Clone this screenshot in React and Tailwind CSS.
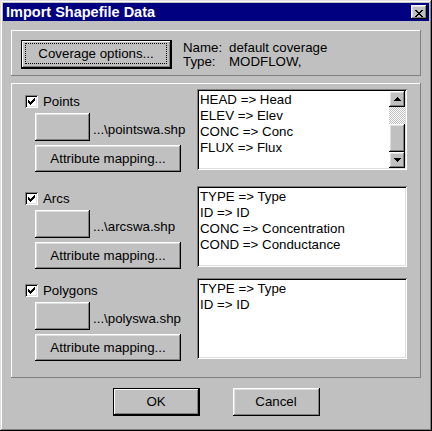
import React from "react";

const raised =
  "shadow-[inset_-1px_-1px_0_#000,inset_1px_1px_0_#fff,inset_-2px_-2px_0_#808080,inset_2px_2px_0_#dfdfdf]";
const defaultBtn =
  "shadow-[inset_0_0_0_1px_#000,inset_-2px_-2px_0_#000,inset_2px_2px_0_#fff,inset_-3px_-3px_0_#808080]";
const sunken =
  "shadow-[inset_1px_1px_0_#808080,inset_-1px_-1px_0_#fff,inset_2px_2px_0_#000,inset_-2px_-2px_0_#dfdfdf]";
const panel = "shadow-[inset_-1px_-1px_0_#808080,inset_1px_1px_0_#fff]";

// tiny pixel glyphs (close X, arrows, check mark)
function Pixels({ rows, className }) {
  const w = rows[0].length;
  const h = rows.length;
  let d = "";
  rows.forEach((r, y) =>
    [...r].forEach((c, x) => {
      if (c === "x") d += `M${x} ${y}h1v1h-1z`;
    })
  );
  return (
    <svg
      width={w}
      height={h}
      viewBox={`0 0 ${w} ${h}`}
      className={className}
      shapeRendering="crispEdges"
    >
      <path d={d} fill="#000" />
    </svg>
  );
}

const closeX = [
  "xx....xx",
  ".xx..xx.",
  "..xxxx..",
  "...xx...",
  "..xxxx..",
  ".xx..xx.",
  "xx....xx",
];
const upArrow = ["...x...", "..xxx..", ".xxxxx.", "xxxxxxx"];
const downArrow = ["xxxxxxx", ".xxxxx.", "..xxx..", "...x..."];
const check = [
  "......x",
  ".....xx",
  "x...xxx",
  "xx.xxx.",
  "xxxxx..",
  ".xxx...",
  "..x....",
];

function Checkbox() {
  return (
    <div className={`h-[13px] w-[13px] bg-white pl-[3px] pt-[3px] ${sunken}`}>
      <Pixels rows={check} className="block" />
    </div>
  );
}

function ScrollBar() {
  return (
    <div className="flex w-[16px] flex-col">
      <div className={`flex h-[16px] items-center justify-center bg-[#c0c0c0] pb-[1px] ${raised}`}>
        <Pixels rows={upArrow} className="block" />
      </div>
      <div className="h-[17px] bg-[image:repeating-conic-gradient(#fff_0_25%,#c0c0c0_0_50%)] bg-[length:2px_2px]" />
      <div className={`h-[28px] bg-[#c0c0c0] ${raised}`} />
      <div className={`flex h-[16px] items-center justify-center bg-[#c0c0c0] pb-[1px] ${raised}`}>
        <Pixels rows={downArrow} className="block" />
      </div>
    </div>
  );
}

function Section({ label, file, lines, scroll, className = "" }) {
  return (
    <div className={`flex ${className}`}>
      <div className="w-[186px] pl-[14px]">
        <div className="mt-[6px] flex h-[13px] items-center gap-[5px]">
          <Checkbox />
          <span className="leading-[16px]">{label}</span>
        </div>
        <div className="mt-[5px] flex items-end pl-[10px]">
          <button className={`h-[28px] w-[55px] bg-[#c0c0c0] ${raised}`} />
          <span className="ml-[3px] pb-[3px] leading-[16px]">{file}</span>
        </div>
        <button
          className={`ml-[10px] mt-[4px] flex h-[27px] w-[146px] items-center justify-center bg-[#c0c0c0] ${raised}`}
        >
          Attribute mapping...
        </button>
      </div>
      <div className={`flex h-[81px] w-[210px] bg-white p-[2px] ${sunken}`}>
        <div className="flex-1 pl-[1px] pt-[1px] leading-[16px]">
          {lines.map((l) => (
            <div key={l}>{l}</div>
          ))}
        </div>
        {scroll && <ScrollBar />}
      </div>
    </div>
  );
}

export default function App() {
  return (
    <div
      className={`h-[431px] w-[432px] bg-[#c0c0c0] p-[3px] font-['Liberation_Sans',Arial,sans-serif] text-[13.3px] text-black shadow-[inset_-1px_-1px_0_#000,inset_1px_1px_0_#dfdfdf,inset_-2px_-2px_0_#808080,inset_2px_2px_0_#fff]`}
    >
      <div className="flex h-[18px] items-center bg-[#000080] pl-[3px] pr-[2px]">
        <span className="flex-1 text-[14.5px] font-bold leading-[18px] text-white">
          Import Shapefile Data
        </span>
        <button className={`h-[14px] w-[16px] bg-[#c0c0c0] pl-[4px] pt-[3px] ${raised}`}>
          <Pixels rows={closeX} className="block" />
        </button>
      </div>

      <div className="px-[8px]">
        <div className={`mt-[9px] flex h-[46px] items-start pl-[10px] pt-[10px] ${panel}`}>
          <button className={`flex h-[29px] w-[151px] bg-[#c0c0c0] ${defaultBtn}`}>
            <span className="m-[3px_5px_5px_4px] flex flex-1 items-center justify-center border border-dotted border-black">
              Coverage options...
            </span>
          </button>
          <div className="ml-[11px] mt-[1px] leading-[14px]">
            <div className="flex">
              <span className="w-[46px]">Name:</span>
              <span>default coverage</span>
            </div>
            <div className="flex">
              <span className="w-[46px]">Type:</span>
              <span>MODFLOW,</span>
            </div>
          </div>
        </div>

        <div className={`mt-[7px] h-[295px] pt-[6px] ${panel}`}>
          <Section
            label="Points"
            file="...\pointswa.shp"
            lines={["HEAD => Head", "ELEV => Elev", "CONC => Conc", "FLUX => Flux"]}
            scroll
          />
          <Section
            label="Arcs"
            file="...\arcswa.shp"
            lines={[
              "TYPE => Type",
              "ID => ID",
              "CONC => Concentration",
              "COND => Conductance",
            ]}
            className="mt-[14px]"
          />
          <Section
            label="Polygons"
            file="...\polyswa.shp"
            lines={["TYPE => Type", "ID => ID"]}
            className="mt-[9px]"
          />
        </div>

        <div className="mt-[10px] flex justify-center gap-[33px]">
          <button className={`h-[28px] w-[87px] bg-[#c0c0c0] ${defaultBtn}`}>OK</button>
          <button className={`h-[28px] w-[87px] bg-[#c0c0c0] ${raised}`}>Cancel</button>
        </div>
      </div>
    </div>
  );
}
